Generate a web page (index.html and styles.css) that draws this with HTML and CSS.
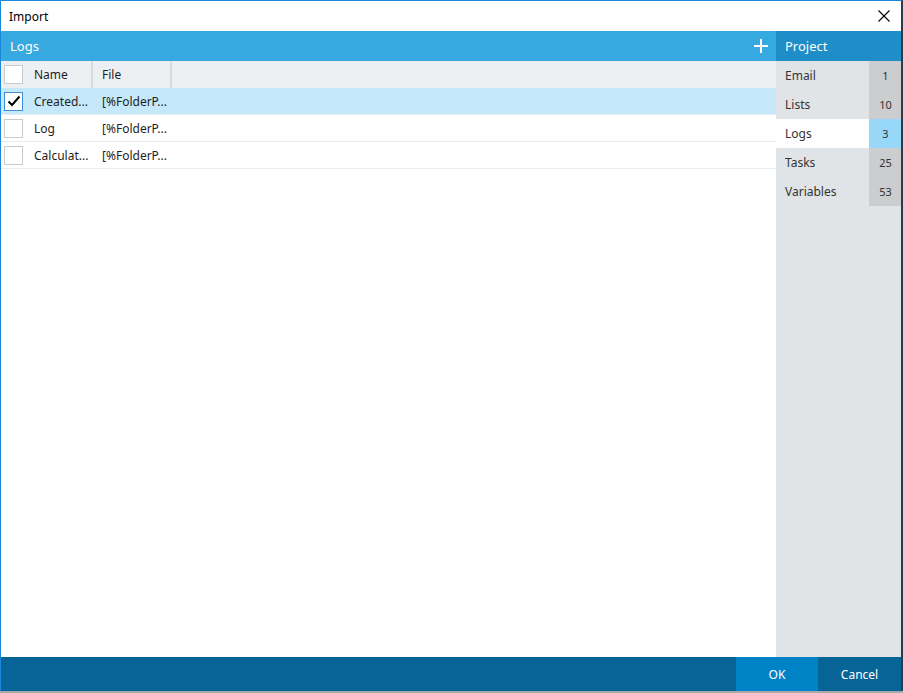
FILE: index.html
```html
<!DOCTYPE html>
<html lang="en">
<head>
<meta charset="utf-8">
<title>Import</title>
<link rel="stylesheet" href="styles.css">
</head>
<body>
<div class="window">
  <div class="titlebar">
    <span class="title">Import</span>
    <svg class="close" width="12" height="12" viewBox="0 0 12 12"><path d="M0.5 0.5L11.5 11.5M11.5 0.5L0.5 11.5" stroke="#000" stroke-width="1.1" fill="none"/></svg>
  </div>
  <div class="body">
    <div class="main">
      <div class="bar">
        <span class="bar-title">Logs</span>
        <svg class="add" width="14" height="14" viewBox="0 0 14 14"><path d="M7 0V14M0 7H14" stroke="#fff" stroke-width="2" fill="none"/></svg>
      </div>
      <div class="grid">
        <div class="row head">
          <div class="cell chk"><span class="box"></span></div>
          <div class="cell name">Name</div>
          <div class="cell file">File</div>
        </div>
        <div class="row selected">
          <div class="cell chk"><span class="box checked"><svg width="14" height="12" viewBox="0 0 14 12"><path d="M1.5 6.5L5 10L12.5 1.5" stroke="#000" stroke-width="2" fill="none"/></svg></span></div>
          <div class="cell name">Created...</div>
          <div class="cell file">[%FolderP...</div>
        </div>
        <div class="row">
          <div class="cell chk"><span class="box"></span></div>
          <div class="cell name">Log</div>
          <div class="cell file">[%FolderP...</div>
        </div>
        <div class="row">
          <div class="cell chk"><span class="box"></span></div>
          <div class="cell name">Calculat...</div>
          <div class="cell file">[%FolderP...</div>
        </div>
      </div>
    </div>
    <div class="side">
      <div class="side-head">Project</div>
      <ul class="nav">
        <li><span class="label">Email</span><span class="count">1</span></li>
        <li><span class="label">Lists</span><span class="count">10</span></li>
        <li class="active"><span class="label">Logs</span><span class="count">3</span></li>
        <li><span class="label">Tasks</span><span class="count">25</span></li>
        <li><span class="label">Variables</span><span class="count">53</span></li>
      </ul>
    </div>
  </div>
  <div class="footer">
    <button class="btn ok">OK</button>
    <button class="btn cancel">Cancel</button>
  </div>
</div>
</body>
</html>
```
FILE: styles.css
```css
* { box-sizing: border-box; }
html, body {
  margin: 0;
  padding: 0;
  width: 903px;
  height: 693px;
  overflow: hidden;
  background: #a9a9a9;
}
body {
  font-family: "Noto Sans", "Open Sans", sans-serif;
  font-size: 12px;
  color: #1e1e1e;
}
.window {
  width: 903px;
  height: 691px;
  display: flex;
  flex-direction: column;
  border-left: 1px solid #1c86d9;
  border-top: 1px solid #1c86d9;
  border-right: 2px solid #2b3b4a;
  background: #fff;
}
.titlebar {
  height: 30px;
  flex: none;
  display: flex;
  align-items: center;
  justify-content: space-between;
  padding: 0 11px 0 8px;
  background: #fff;
}
.title { color: #000; font-size: 12px; }
.close { display: block; }

.body {
  flex: 1;
  display: flex;
  min-height: 0;
}
.main {
  flex: 1;
  display: flex;
  flex-direction: column;
  background: #fff;
}
.bar {
  height: 30px;
  background: #36a9e0;
  color: #fff;
  display: flex;
  align-items: center;
  justify-content: space-between;
  padding: 0 8px 0 9px;
  font-size: 13px;
}
.add { display: block; }

.row {
  display: flex;
  height: 27px;
  align-items: center;
  border-bottom: 1px solid #e8ecef;
}
.row.head {
  background: #edf0f3;
  border-bottom: none;
}
.row.selected { background: #c5e9fb; }
.cell { height: 100%; display: flex; align-items: center; white-space: nowrap; }
.chk { width: 23px; padding-left: 3px; }
.name { width: 69px; padding-left: 10px; color: #1e1e1e; }
.file { width: 79px; padding-left: 9px; color: #1e1e1e; }
.head .name, .head .file { border-right: 2px solid #d8dbde; }
.box {
  width: 19px;
  height: 19px;
  border: 1px solid #cacaca;
  background: #fff;
  display: flex;
  align-items: center;
  justify-content: center;
}
.box.checked { border-color: #3b8fd6; }
.box svg { display: block; }

.side {
  width: 125px;
  flex: none;
  background: #e1e4e7;
  display: flex;
  flex-direction: column;
}
.side-head {
  height: 30px;
  background: #1e8dc8;
  color: #fff;
  font-size: 13px;
  display: flex;
  align-items: center;
  padding-left: 9px;
}
.nav {
  list-style: none;
  margin: 0;
  padding: 0;
}
.nav li {
  height: 29px;
  display: flex;
  align-items: center;
  justify-content: space-between;
  color: #333;
}
.nav .label { padding-left: 9px; }
.nav .count {
  width: 32px;
  height: 100%;
  background: #cbcdcf;
  display: flex;
  align-items: center;
  justify-content: center;
  padding-left: 1px;
  font-size: 11px;
  color: #333;
}
.nav li.active { background: #fff; }
.nav li.active .count { background: #97d8f9; }

.footer {
  height: 34px;
  flex: none;
  background: #076496;
  display: flex;
  justify-content: flex-end;
}
.btn {
  border: none;
  margin: 0;
  font-family: inherit;
  font-size: 12px;
  color: #fff;
  height: 34px;
  padding: 0;
  cursor: pointer;
}
.ok { width: 82px; background: #0083c6; }
.cancel { width: 83px; background: #076496; }
```
